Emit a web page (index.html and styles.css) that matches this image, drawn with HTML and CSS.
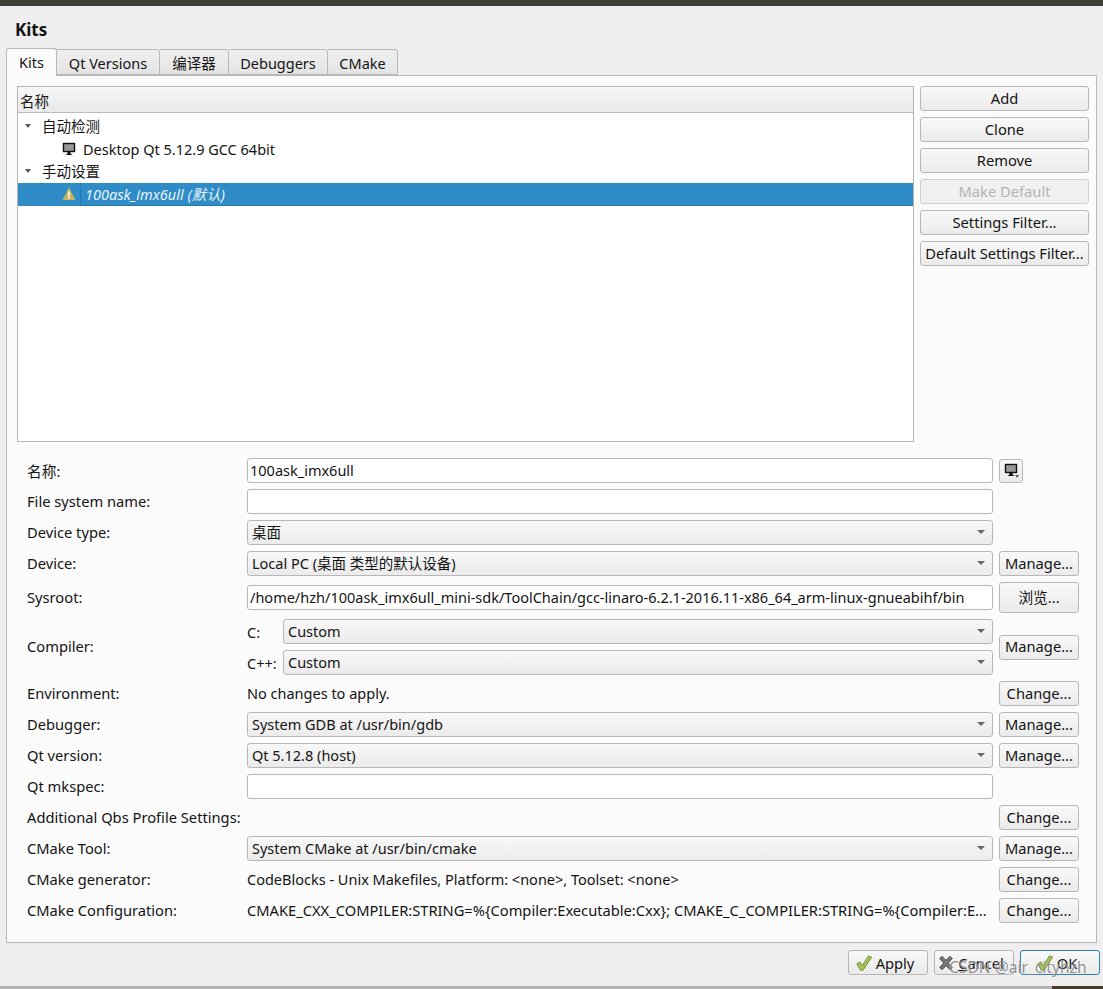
FILE: index.html
```html
<!DOCTYPE html>
<html lang="zh">
<head>
<meta charset="utf-8">
<title>Kits</title>
<link rel="stylesheet" href="styles.css">
</head>
<body>
<svg width="0" height="0" class="defs">
  <defs>
    <symbol id="monitor" viewBox="0 0 14 14">
      <rect x="1.5" y="1.5" width="11" height="8" fill="#9a9a9a" stroke="#111" stroke-width="1.4"/>
      <path d="M5.5 10h3v1.5l2 1.5h-7l2-1.5z" fill="#111"/>
    </symbol>
    <symbol id="check" viewBox="0 0 20 20">
      <path d="M2 11l3.5-2 2.8 3.6L15 2l3.5 1.5L9 18H6z" fill="#a4c257" stroke="#6f8f35" stroke-width="1"/>
    </symbol>
    <symbol id="cross" viewBox="0 0 20 20">
      <path d="M3 5l2.5-2.5L10 7l4.5-4.5L17 5l-4.5 5 4.5 5-2.5 2.5L10 13l-4.5 4.5L3 15l4.5-5z" fill="#777" stroke="#444" stroke-width="1"/>
    </symbol>
  </defs>
</svg>
<div class="topbar"></div>
<main class="dialog">
  <h1 class="title">Kits</h1>
  <div class="tabs">
    <div class="tab active">Kits</div>
    <div class="tab t2">Qt Versions</div>
    <div class="tab t3">编译器</div>
    <div class="tab t4">Debuggers</div>
    <div class="tab t5">CMake</div>
  </div>
  <section class="panel">
    <div class="top">
      <div class="tree">
        <div class="tree-head">名称</div>
        <div class="row group"><span class="arrow"></span>自动检测</div>
        <div class="row item"><svg class="ico"><use href="#monitor"/></svg><span>Desktop Qt 5.12.9 GCC 64bit</span></div>
        <div class="row group"><span class="arrow"></span>手动设置</div>
        <div class="row item selected">
          <svg class="ico" viewBox="0 0 14 14"><path d="M7 .5l6.5 12.5H.5z" fill="#c8b45a"/><rect x="6.2" y="4.5" width="1.6" height="5" fill="#fff"/><rect x="6.2" y="10.2" width="1.6" height="1.6" fill="#fff"/></svg>
          <span class="sel-text">100ask_imx6ull (默认)</span>
        </div>
      </div>
      <div class="side">
        <button class="btn">Add</button>
        <button class="btn">Clone</button>
        <button class="btn">Remove</button>
        <button class="btn disabled">Make Default</button>
        <button class="btn">Settings Filter...</button>
        <button class="btn">Default Settings Filter...</button>
      </div>
    </div>
    <div class="form">
      <div class="frow">
        <label class="lbl cjk">名称:</label>
        <div class="input">100ask_imx6ull</div>
        <button class="btn tool"><svg class="tool-ico"><use href="#monitor"/></svg><span class="tool-arrow"></span></button>
      </div>
      <div class="frow">
        <label class="lbl">File system name:</label>
        <div class="input"></div>
      </div>
      <div class="frow">
        <label class="lbl">Device type:</label>
        <div class="combo">桌面</div>
      </div>
      <div class="frow">
        <label class="lbl">Device:</label>
        <div class="combo">Local PC (桌面 类型的默认设备)</div>
        <button class="btn act">Manage...</button>
      </div>
      <div class="frow tall">
        <label class="lbl">Sysroot:</label>
        <div class="input">/home/hzh/100ask_imx6ull_mini-sdk/ToolChain/gcc-linaro-6.2.1-2016.11-x86_64_arm-linux-gnueabihf/bin</div>
        <button class="btn act big">浏览...</button>
      </div>
      <div class="frow compiler">
        <label class="lbl">Compiler:</label>
        <div class="pair">
          <div class="sub"><span class="sub-lbl">C:</span><div class="combo">Custom</div></div>
          <div class="sub"><span class="sub-lbl">C++:</span><div class="combo">Custom</div></div>
        </div>
        <button class="btn act">Manage...</button>
      </div>
      <div class="frow">
        <label class="lbl">Environment:</label>
        <div class="plain">No changes to apply.</div>
        <button class="btn act">Change...</button>
      </div>
      <div class="frow">
        <label class="lbl">Debugger:</label>
        <div class="combo">System GDB at /usr/bin/gdb</div>
        <button class="btn act">Manage...</button>
      </div>
      <div class="frow">
        <label class="lbl">Qt version:</label>
        <div class="combo">Qt 5.12.8 (host)</div>
        <button class="btn act">Manage...</button>
      </div>
      <div class="frow">
        <label class="lbl">Qt mkspec:</label>
        <div class="input"></div>
      </div>
      <div class="frow">
        <label class="lbl">Additional Qbs Profile Settings:</label>
        <div class="plain"></div>
        <button class="btn act">Change...</button>
      </div>
      <div class="frow">
        <label class="lbl">CMake Tool:</label>
        <div class="combo">System CMake at /usr/bin/cmake</div>
        <button class="btn act">Manage...</button>
      </div>
      <div class="frow">
        <label class="lbl">CMake generator:</label>
        <div class="plain">CodeBlocks - Unix Makefiles, Platform: &lt;none&gt;, Toolset: &lt;none&gt;</div>
        <button class="btn act">Change...</button>
      </div>
      <div class="frow">
        <label class="lbl">CMake Configuration:</label>
        <div class="plain long">CMAKE_CXX_COMPILER:STRING=%{Compiler:Executable:Cxx}; CMAKE_C_COMPILER:STRING=%{Compiler:E…</div>
        <button class="btn act">Change...</button>
      </div>
    </div>
  </section>
  <div class="actions">
    <button class="btn dlg"><svg class="dlg-ico"><use href="#check"/></svg>Apply</button>
    <button class="btn dlg"><svg class="dlg-ico"><use href="#cross"/></svg><span><u>C</u>ancel</span></button>
    <button class="btn dlg default"><svg class="dlg-ico"><use href="#check"/></svg>OK</button>
  </div>
</main>
<div class="bottom"><div class="photo"></div></div>
<div class="watermark">CSDN @air_cityhzh</div>
</body>
</html>
```
FILE: styles.css
```css
* { box-sizing: border-box; }
html, body { margin: 0; padding: 0; }
body {
  position: relative;
  width: 1103px;
  height: 989px;
  overflow: hidden;
  background: #efefef;
  color: #141414;
  font-family: "Noto Sans", "Noto Sans CJK SC", sans-serif;
  font-size: 14.5px;
  line-height: 20px;
}
.defs { position: absolute; }
.topbar { height: 6px; background: #3f3d38; }
.dialog { height: 980px; padding: 0 3px 0 6px; display: flex; flex-direction: column; }
.title { margin: 14px 0 0 9px; height: 28px; font-size: 17px; line-height: 20px; font-weight: 700; color: #111; }
.tabs { display: flex; height: 28px; align-items: flex-end; position: relative; z-index: 1; }
.tab {
  height: 26px;
  margin-bottom: 1px;
  border: 1px solid #b9b9b9;
  border-left: 0;
  border-radius: 0 3px 0 0;
  background: linear-gradient(#efefef, #e4e4e4);
  text-align: center;
  line-height: 26px;
}
.tab.active {
  width: 51px;
  height: 28px;
  margin-bottom: 0;
  border-left: 1px solid #b9b9b9;
  border-bottom: 0;
  border-radius: 3px 3px 0 0;
  background: #fbfbfb;
  line-height: 27px;
}
.t2 { width: 103px; }
.t3 { width: 69px; }
.t4 { width: 99px; }
.t5 { width: 70px; }
.panel {
  width: 1091px;
  height: 868px;
  margin-top: -1px;
  padding: 10px 7px 0 10px;
  border: 1px solid #b9b9b9;
  background: #fbfbfb;
}
.top { display: flex; gap: 6px; height: 372px; }
.tree { width: 897px; height: 356px; flex: none; border: 1px solid #b4b4b4; background: #fff; }
.tree-head {
  height: 26px;
  padding-left: 2px;
  border-bottom: 1px solid #bdbdbd;
  background: linear-gradient(#f6f6f6, #e9e9e9);
  line-height: 28px;
}
.row { height: 22.6px; display: flex; align-items: center; line-height: 22px; }
.tree-head + .row { margin-top: 2px; }
.group { padding-left: 7px; }
.arrow {
  width: 0;
  height: 0;
  margin-right: 11px;
  border-left: 3.5px solid transparent;
  border-right: 3.5px solid transparent;
  border-top: 4px solid #555;
}
.item { padding-left: 44px; }
.ico { width: 14px; height: 14px; margin-right: 7px; flex: none; }
.selected { height: 23px; padding-left: 44px; background: #308cc6; color: #e6f1f8; font-style: italic; }
.selected .ico { margin-right: 4px; }
.sel-text { flex: 1; height: 23px; padding-left: 4px; border-left: 1px solid #2877aa; border-bottom: 1px solid #2877aa; }
.side { width: 169px; flex: none; display: flex; flex-direction: column; gap: 6px; }
.btn {
  display: block;
  height: 25px;
  padding: 0 0 2px;
  border: 1px solid #b7b7b7;
  border-radius: 3px;
  background: linear-gradient(#f8f8f8, #ebebeb);
  color: #141414;
  font: inherit;
  font-size: 14.7px;
  line-height: 20px;
  text-align: center;
  white-space: nowrap;
}
.disabled { color: #b4b4b4; background: #f0f0f0; border-color: #cfcfcf; }
.form { padding-left: 10px; display: flex; flex-direction: column; gap: 6px; }
.frow { display: flex; align-items: center; height: 25px; gap: 6px; }
.frow.tall { height: 31px; }
.frow.compiler { height: 56px; }
.lbl { width: 214px; flex: none; white-space: nowrap; font-size: 14.7px; padding-bottom: 2px; }
.lbl.cjk { padding-bottom: 0; }
.input, .combo, .plain { width: 746px; height: 25px; flex: none; line-height: 23px; white-space: nowrap; overflow: hidden; }
.input { padding-left: 2px; border: 1px solid #b7b7b7; border-radius: 3px; background: #fff; }
.combo {
  position: relative;
  padding-left: 4px;
  border: 1px solid #b7b7b7;
  border-radius: 3px;
  background: linear-gradient(#f8f8f8, #ebebeb);
}
.combo::after {
  content: "";
  position: absolute;
  right: 7px;
  top: 9px;
  border-left: 4px solid transparent;
  border-right: 4px solid transparent;
  border-top: 4px solid #666;
}
.plain { line-height: 25px; }
.plain.long { font-size: 14.68px; }
.act { width: 80px; flex: none; }
.big { height: 31px; }
.tool { position: relative; width: 24px; height: 24px; flex: none; }
.tool-ico { position: absolute; left: 4px; top: 3px; width: 14px; height: 14px; }
.tool-arrow {
  position: absolute;
  right: 3px;
  bottom: 4px;
  border-left: 2.5px solid transparent;
  border-right: 2.5px solid transparent;
  border-top: 3px solid #555;
}
.pair { width: 746px; flex: none; display: flex; flex-direction: column; gap: 6px; }
.sub { display: flex; height: 25px; align-items: center; }
.sub-lbl { width: 36px; flex: none; }
.sub .combo { width: 710px; }
.actions { display: flex; justify-content: flex-end; gap: 6px; margin-top: 7px; }
.dlg { width: 80px; display: flex; align-items: center; justify-content: center; gap: 3px; padding: 0 7px 0 0; }
.dlg-ico { width: 18px; height: 18px; flex: none; }
.default { border-color: #2f7fb3; }
.bottom { height: 3px; background: #b2b2b2; display: flex; justify-content: flex-end; }
.photo { width: 51px; background: #4a3a28; }
.watermark {
  position: absolute;
  left: 949px;
  top: 957px;
  font-size: 15.6px;
  line-height: 20px;
  color: rgba(110, 110, 110, 0.75);
  text-shadow: 0 0 1px rgba(255, 255, 255, 0.7);
  white-space: nowrap;
}
```
